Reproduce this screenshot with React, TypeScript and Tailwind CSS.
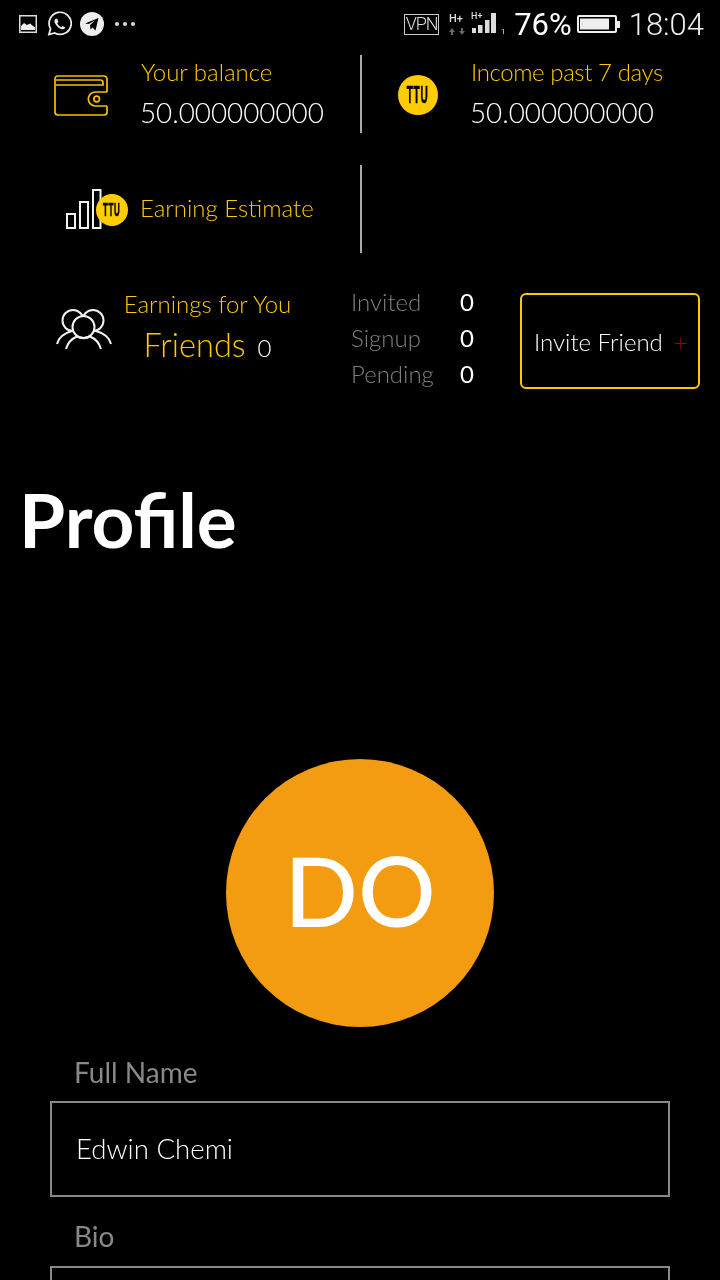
import React from "react";

function Ttu({ size, fs }: { size: string; fs: string }) {
  return (
    <div className={`${size} ${fs} flex items-center justify-center rounded-full bg-[#ffcc00] font-bold leading-none text-black font-['Liberation_Sans',sans-serif] [-webkit-text-stroke:0.7px_black]`}>
      <span className="inline-block scale-x-[0.42] tracking-[1.5px]">TTU</span>
    </div>
  );
}

function Wallet() {
  return (
    <svg width="54" height="41" viewBox="0 0 54 41" fill="none" stroke="#f2c200" strokeWidth="1.7" className="block">
      <path d="M53 17V4a3 3 0 0 0-3-3H4a3 3 0 0 0-3 3v33a3 3 0 0 0 3 3h46a3 3 0 0 0 3-3v-6" />
      <path d="M2 5h44.500q2.500 0 2.500 2.500V10H2" />
      <path d="M53 17H41.300a7 7 0 0 0 0 14H53" />
      <circle cx="42.700" cy="24" r="2.800" />
    </svg>
  );
}

function Bars() {
  return (
    <svg width="36" height="41" viewBox="0 0 36 41" fill="none" stroke="#f2f2f2" strokeWidth="2" className="block">
      <rect x="1" y="25" width="8" height="14" />
      <rect x="14" y="13" width="8" height="26" />
      <rect x="27" y="1" width="7.500" height="38" />
    </svg>
  );
}

function Friends() {
  return (
    <svg width="56" height="42" viewBox="0 0 56 42" fill="none" stroke="#f2f2f2" strokeWidth="2" className="block">
      <circle cx="17" cy="11.500" r="10.500" />
      <circle cx="37" cy="11.500" r="10.500" />
      <circle cx="27.500" cy="18" r="11" fill="#000" />
      <path d="M1 35c1.500-6 6-10.500 15-13M55 35c-1.500-6-6-10.500-15-13" />
      <path d="M10 40c2-7 6-10.500 11-12.500 4 2 9 2 13 0 5 2 9 5.500 11 12.500" />
    </svg>
  );
}

function Row({ label, value }: { label: string; value: string }) {
  return (
    <div className="flex h-[36px] items-center justify-between">
      <span className="text-[24px] font-light text-[#808080]">{label}</span>
      <span className="text-[24px] text-white">{value}</span>
    </div>
  );
}

export default function App() {
  return (
    <div className="h-[1280px] w-[720px] overflow-hidden bg-black">
      <div className="will-change-transform font-['Lato',sans-serif] text-white">
        <div className="flex h-[48px] items-center justify-between pl-[19px] pr-[16px]">
          <div className="flex items-center">
            <svg width="18" height="18" viewBox="0 0 18 18" className="block">
              <rect x="0.750" y="0.750" width="16.500" height="16.500" fill="none" stroke="#ddd" strokeWidth="1.500" />
              <path d="M2 15v-4l3-3 3 2 3-1.500 5 4V15z" fill="#eee" />
            </svg>
            <svg width="25" height="26" viewBox="0 0 26 26" fill="none" className="ml-[10px] block">
              <path d="M2 24l1.700-6A11.500 11.500 0 1 1 8 22.300z" stroke="#eee" strokeWidth="1.800" />
              <path d="M9 7.500c-1.500 1-1.700 3-.500 5 1.300 2.500 3.500 4.700 6 5.700 2 .8 3.700.2 4.500-1.500l-2.800-1.700-1.300 1.300c-2-.8-3.300-2.200-4.200-4l1.200-1.300L10.700 7.500z" fill="#eee" />
            </svg>
            <svg width="24" height="24" viewBox="0 0 24 24" className="ml-[8px] block">
              <circle cx="12" cy="12" r="12" fill="#eee" />
              <path d="M5 11.500L18.500 6l-3 12.500-3-3-2 2-.500-4.500 5-4.500-6.500 3.500z" fill="#000" />
            </svg>
            <div className="ml-[11px] flex gap-[4px]">
              <span className="h-[4px] w-[4px] rounded-full bg-[#ddd]" />
              <span className="h-[4px] w-[4px] rounded-full bg-[#ddd]" />
              <span className="h-[4px] w-[4px] rounded-full bg-[#ddd]" />
            </div>
          </div>
          <div className="flex items-center font-['Roboto',sans-serif]">
            <span className="flex h-[21px] w-[35px] items-center justify-center border border-[#ccc] text-[18px] font-light leading-none tracking-[-1px] text-[#ddd]">VPN</span>
            <svg width="57" height="26" viewBox="0 0 57 26" className="ml-[9px] block" fill="#ddd">
              <text x="1" y="11" fontSize="11" fontWeight="500" fontFamily="Roboto">H+</text>
              <path d="M4 17l3 4H5v3H3v-3H1zM14 24l3-4h-2v-3h-2v3h-2z" fill="#666" />
              <text x="23" y="7.500" fontSize="9" fontWeight="500" fontFamily="Roboto">H+</text>
              <rect x="24" y="17" width="4" height="5" />
              <rect x="30" y="14" width="4.500" height="8" />
              <rect x="37" y="9" width="4.500" height="13" />
              <rect x="43" y="2" width="5" height="20" />
              <text x="53" y="23" fontSize="8">1</text>
            </svg>
            <span className="ml-[9px] text-[31px] leading-none text-white">76%</span>
            <svg width="43" height="18" viewBox="0 0 43 18" className="ml-[5px] block">
              <rect x="1" y="1" width="38" height="16" rx="1" fill="none" stroke="#eee" strokeWidth="2" />
              <rect x="3" y="3.500" width="29" height="11" fill="#eee" />
              <rect x="40" y="6" width="3" height="7" fill="#eee" />
            </svg>
            <span className="ml-[9px] text-[31px] font-light leading-none text-[#eee]">18:04</span>
          </div>
        </div>

        <div className="mt-[7px] flex h-[78px]">
          <div className="flex w-[362px] border-r-2 border-[#aaa] pl-[54px]">
            <div className="mr-[33px] pt-[20px]"><Wallet /></div>
            <div className="-mt-[1px]">
              <div className="text-[24px] font-light leading-[36px] text-[#ffc800]">Your balance</div>
              <div className="-ml-[1px] text-[27.800px] font-light leading-[46px] text-white">50.000000000</div>
            </div>
          </div>
          <div className="flex pl-[36px]">
            <div className="mr-[33px] pt-[20px]"><Ttu size="h-[40px] w-[40px]" fs="text-[24px]" /></div>
            <div className="-mt-[1px]">
              <div className="text-[24px] font-light leading-[36px] tracking-[-0.4px] text-[#ffc800]">Income past 7 days</div>
              <div className="-ml-[1px] text-[27.800px] font-light leading-[46px] text-white">50.000000000</div>
            </div>
          </div>
        </div>

        <div className="mt-[32px] flex h-[88px] w-[362px] items-center border-r-2 border-[#aaa] pl-[66px]">
          <div className="relative h-[41px] w-[62px]">
            <Bars />
            <div className="absolute left-[30px] top-[5px]"><Ttu size="h-[32px] w-[32px]" fs="text-[19px]" /></div>
          </div>
          <span className="mb-[2px] ml-[12px] text-[24px] font-light text-[#ffc800]">Earning Estimate</span>
        </div>

        <div className="mt-[40px] flex h-[96px]">
          <div className="flex w-[351px] pl-[56px]">
            <div className="mr-[10px] pt-[16px]"><Friends /></div>
            <div className="-mt-[1px] w-[171px] text-center">
              <div className="text-[24px] font-light leading-[24px] text-[#ffc800]">Earnings for You</div>
              <div className="mt-[9px] flex items-baseline justify-center gap-[12px]">
                <span className="text-[32.500px] font-light leading-[40px] text-[#ffc800]">Friends</span>
                <span className="text-[24px] font-light text-white">0</span>
              </div>
            </div>
          </div>
          <div className="-mt-[9px] w-[123px]">
            <Row label="Invited" value="0" />
            <Row label="Signup" value="0" />
            <Row label="Pending" value="0" />
          </div>
          <div className="ml-[46px] flex h-[96px] w-[180px] items-center rounded-[6px] border-2 border-[#f9c901] pl-[12px] pt-[2px] text-[24px] font-light">
            Invite Friend<span className="ml-[11px] text-[#a00000]">+</span>
          </div>
        </div>

        <h1 className="mt-[85px] pl-[19px] text-[74.700px] font-bold leading-[90px] text-white">Profile</h1>

        <div className="mt-[195px] flex justify-center">
          <div className="flex h-[268px] w-[268px] items-center justify-center rounded-full bg-[#f39c12] pb-[8px] text-[97px] font-medium leading-none text-white">
            <span className="blur-[0.5px]">DO</span>
          </div>
        </div>

        <div className="px-[50px]">
          <div className="mt-[25px] pl-[24px] text-[28px] leading-[40px] text-[#888]">Full Name</div>
          <div className="mt-[9px] flex h-[96px] items-center border-2 border-[#888] pl-[24px] text-[27.600px] font-light text-white">Edwin Chemi</div>
          <div className="mt-[19px] pl-[24px] text-[28px] leading-[40px] text-[#888]">Bio</div>
          <div className="mt-[10px] h-[96px] border-2 border-[#888]" />
        </div>
      </div>
    </div>
  );
}
